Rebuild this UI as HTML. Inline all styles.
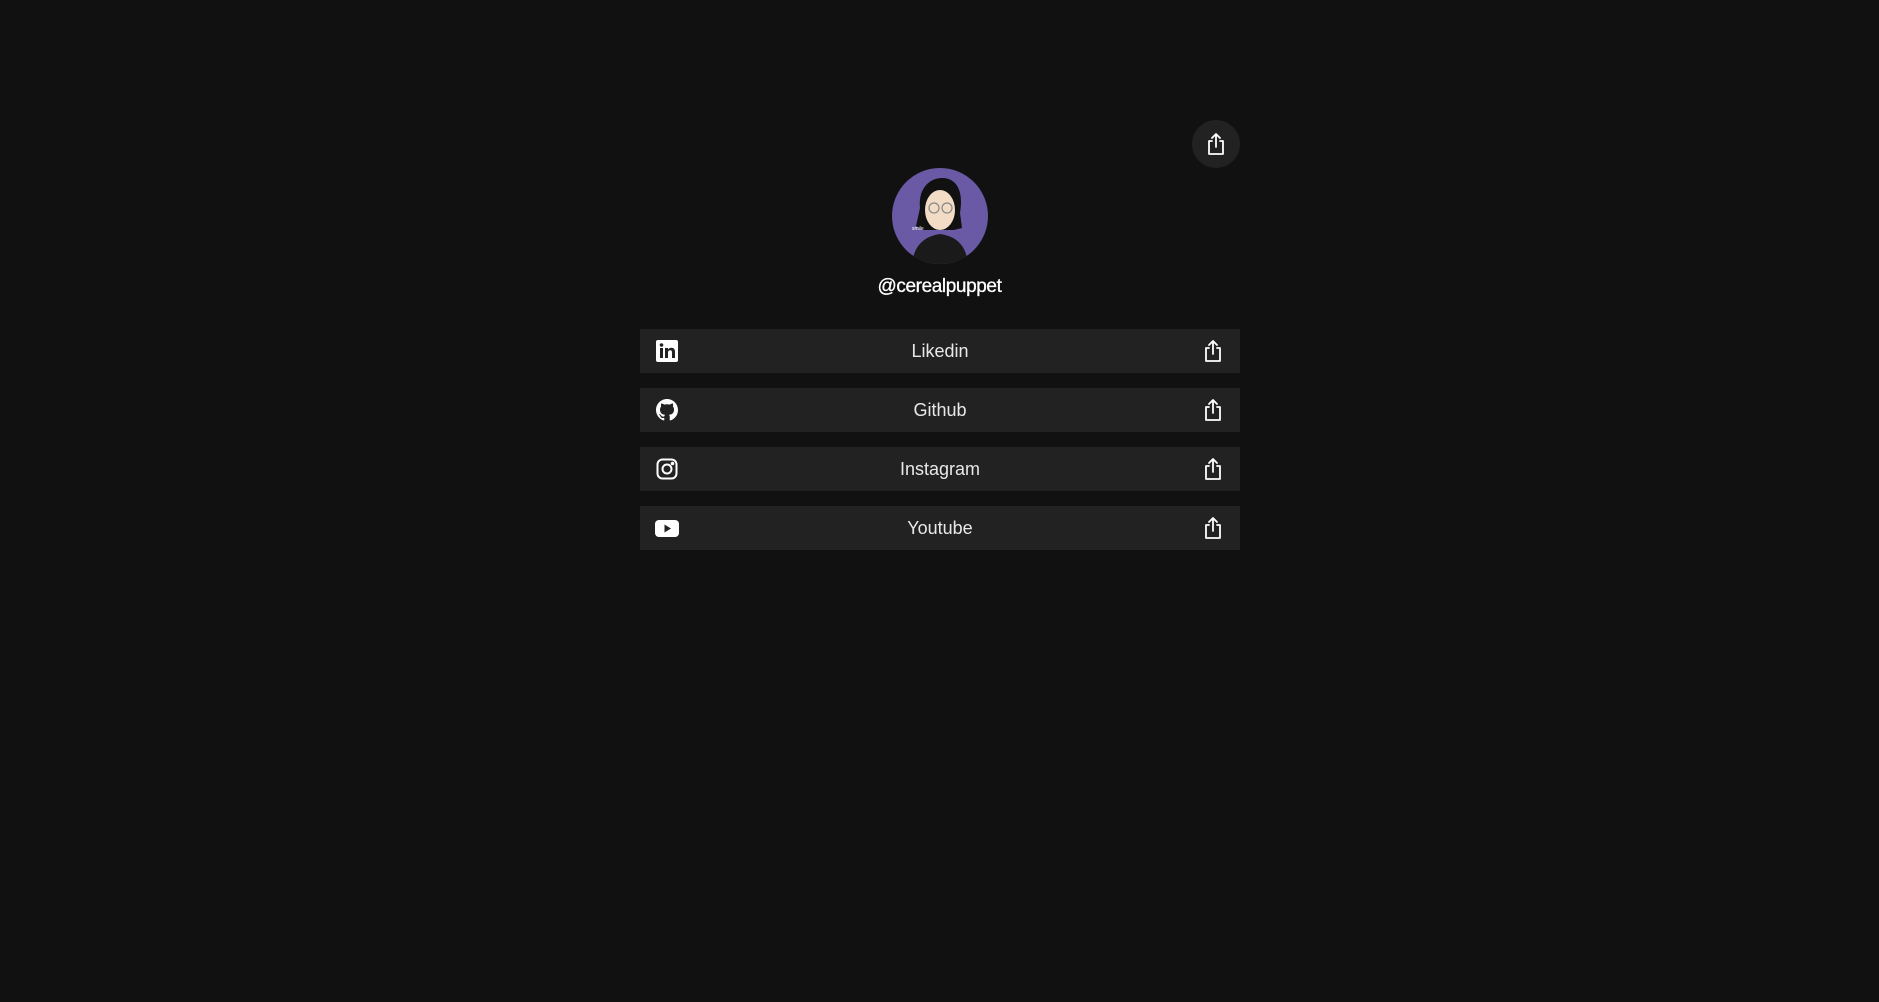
<!DOCTYPE html>
<html><head><meta charset="utf-8"><style>
html,body{margin:0;padding:0;background:#111111;width:1879px;height:1002px;overflow:hidden;font-family:"Liberation Sans",sans-serif;color:#fff}
.share{position:absolute;left:1192px;top:120px;width:48px;height:48px;border-radius:50%;background:#222;display:flex;align-items:center;justify-content:center}
.avatar{position:absolute;left:892px;top:168px;width:96px;height:96px;border-radius:50%;background:#6a5aa6;overflow:hidden}
.name{position:absolute;left:0;width:1879px;top:276px;text-align:center;font-size:19px;letter-spacing:-0.4px;color:#fff;-webkit-text-stroke:0.3px #fff}
.card{position:absolute;left:640px;width:600px;height:44px;background:#222;display:flex;align-items:center;justify-content:center;font-size:18px;color:#e8e8e8}
.card .ic{position:absolute;left:16px;top:11px;width:22px;height:22px}
.card .sh{position:absolute;right:16px;top:10px}
</style></head><body>
<div class="share"><svg width="22" height="24" viewBox="0 0 22 24" fill="none" stroke="#fff" stroke-width="1.8" stroke-linecap="round" stroke-linejoin="round"><path d="M7 9H4v13h14V9h-3"/><path d="M11 15V2M7 6l4-4 4 4"/></svg></div>
<div class="avatar"><svg width="96" height="96" viewBox="0 0 96 96">
<path d="M20 96 C22 75 35 68 48 66 C62 68 74 75 76 96Z" fill="#1a1a1a"/>
<path d="M28 40 C26 20 38 10 50 10 C64 10 72 22 68 45 L70 60 L62 62 L30 62 L24 58Z" fill="#111"/>
<ellipse cx="48" cy="42" rx="15" ry="20" fill="#f3dcc6"/>
<path d="M33 30 C38 18 58 16 64 30 L62 24 C56 14 40 14 33 24Z" fill="#111"/>
<circle cx="42" cy="40" r="5" fill="none" stroke="#888" stroke-width="1.2"/><circle cx="55" cy="40" r="5" fill="none" stroke="#888" stroke-width="1.2"/>
<text x="20" y="62" font-size="5" fill="#fff" font-family="Liberation Sans">smile</text>
</svg></div>
<div class="name">@cerealpuppet</div>

<div class="card" style="top:329px"><svg class="ic" viewBox="0 0 22 22"><rect width="22" height="22" rx="2" fill="#fff"/><rect x="4" y="8" width="3" height="10" fill="#222"/><circle cx="5.5" cy="5" r="1.8" fill="#222"/><path d="M9 8h3v1.5c.8-1.2 2-1.8 3.5-1.8 2.3 0 3.5 1.5 3.5 4.3V18h-3v-5.5c0-1.4-.5-2.2-1.7-2.2S12 11.2 12 12.5V18H9z" fill="#222"/></svg>Likedin<svg class="sh" width="22" height="24" viewBox="0 0 22 24" fill="none" stroke="#fff" stroke-width="1.8" stroke-linecap="round" stroke-linejoin="round"><path d="M7 9H4v13h14V9h-3"/><path d="M11 15V2M7 6l4-4 4 4"/></svg></div>

<div class="card" style="top:388px"><svg class="ic" viewBox="0 0 16 16"><path fill="#fff" d="M8 0C3.58 0 0 3.58 0 8c0 3.54 2.29 6.53 5.47 7.59.4.07.55-.17.55-.38 0-.19-.01-.82-.01-1.49-2.01.37-2.530-.49-2.69-.94-.09-.23-.48-.94-.82-1.130-.28-.15-.68-.52-.01-.53.63-.01 1.08.58 1.23.82.72 1.21 1.87.87 2.33.66.07-.52.28-.87.51-1.070-1.78-.2-3.640-.89-3.640-3.95 0-.87.31-1.59.82-2.150-.08-.2-.36-1.020.08-2.12 0 0 .67-.21 2.2.82.64-.18 1.32-.27 2-.27.68 0 1.36.09 2 .27 1.53-1.04 2.2-.82 2.2-.82.44 1.1.16 1.92.08 2.12.51.56.82 1.27.82 2.15 0 3.07-1.87 3.75-3.65 3.95.29.25.54.73.54 1.48 0 1.07-.01 1.93-.01 2.2 0 .21.15.46.55.38A8.013 8.013 0 0016 8c0-4.42-3.58-8-8-8z"/></svg>Github<svg class="sh" width="22" height="24" viewBox="0 0 22 24" fill="none" stroke="#fff" stroke-width="1.8" stroke-linecap="round" stroke-linejoin="round"><path d="M7 9H4v13h14V9h-3"/><path d="M11 15V2M7 6l4-4 4 4"/></svg></div>

<div class="card" style="top:447px"><svg class="ic" viewBox="0 0 22 22" fill="none" stroke="#fff" stroke-width="2"><rect x="1.5" y="1.5" width="19" height="19" rx="5"/><circle cx="11" cy="11" r="4.5"/><circle cx="16.5" cy="5.5" r=".8" fill="#fff"/></svg>Instagram<svg class="sh" width="22" height="24" viewBox="0 0 22 24" fill="none" stroke="#fff" stroke-width="1.8" stroke-linecap="round" stroke-linejoin="round"><path d="M7 9H4v13h14V9h-3"/><path d="M11 15V2M7 6l4-4 4 4"/></svg></div>

<div class="card" style="top:506px"><svg class="ic" viewBox="0 0 24 22" style="width:24px;left:15px"><rect x="0" y="3" width="24" height="17" rx="4" fill="#fff"/><path d="M9.5 7.5v8l6.5-4z" fill="#222"/></svg>Youtube<svg class="sh" width="22" height="24" viewBox="0 0 22 24" fill="none" stroke="#fff" stroke-width="1.8" stroke-linecap="round" stroke-linejoin="round"><path d="M7 9H4v13h14V9h-3"/><path d="M11 15V2M7 6l4-4 4 4"/></svg></div>
</body></html>
